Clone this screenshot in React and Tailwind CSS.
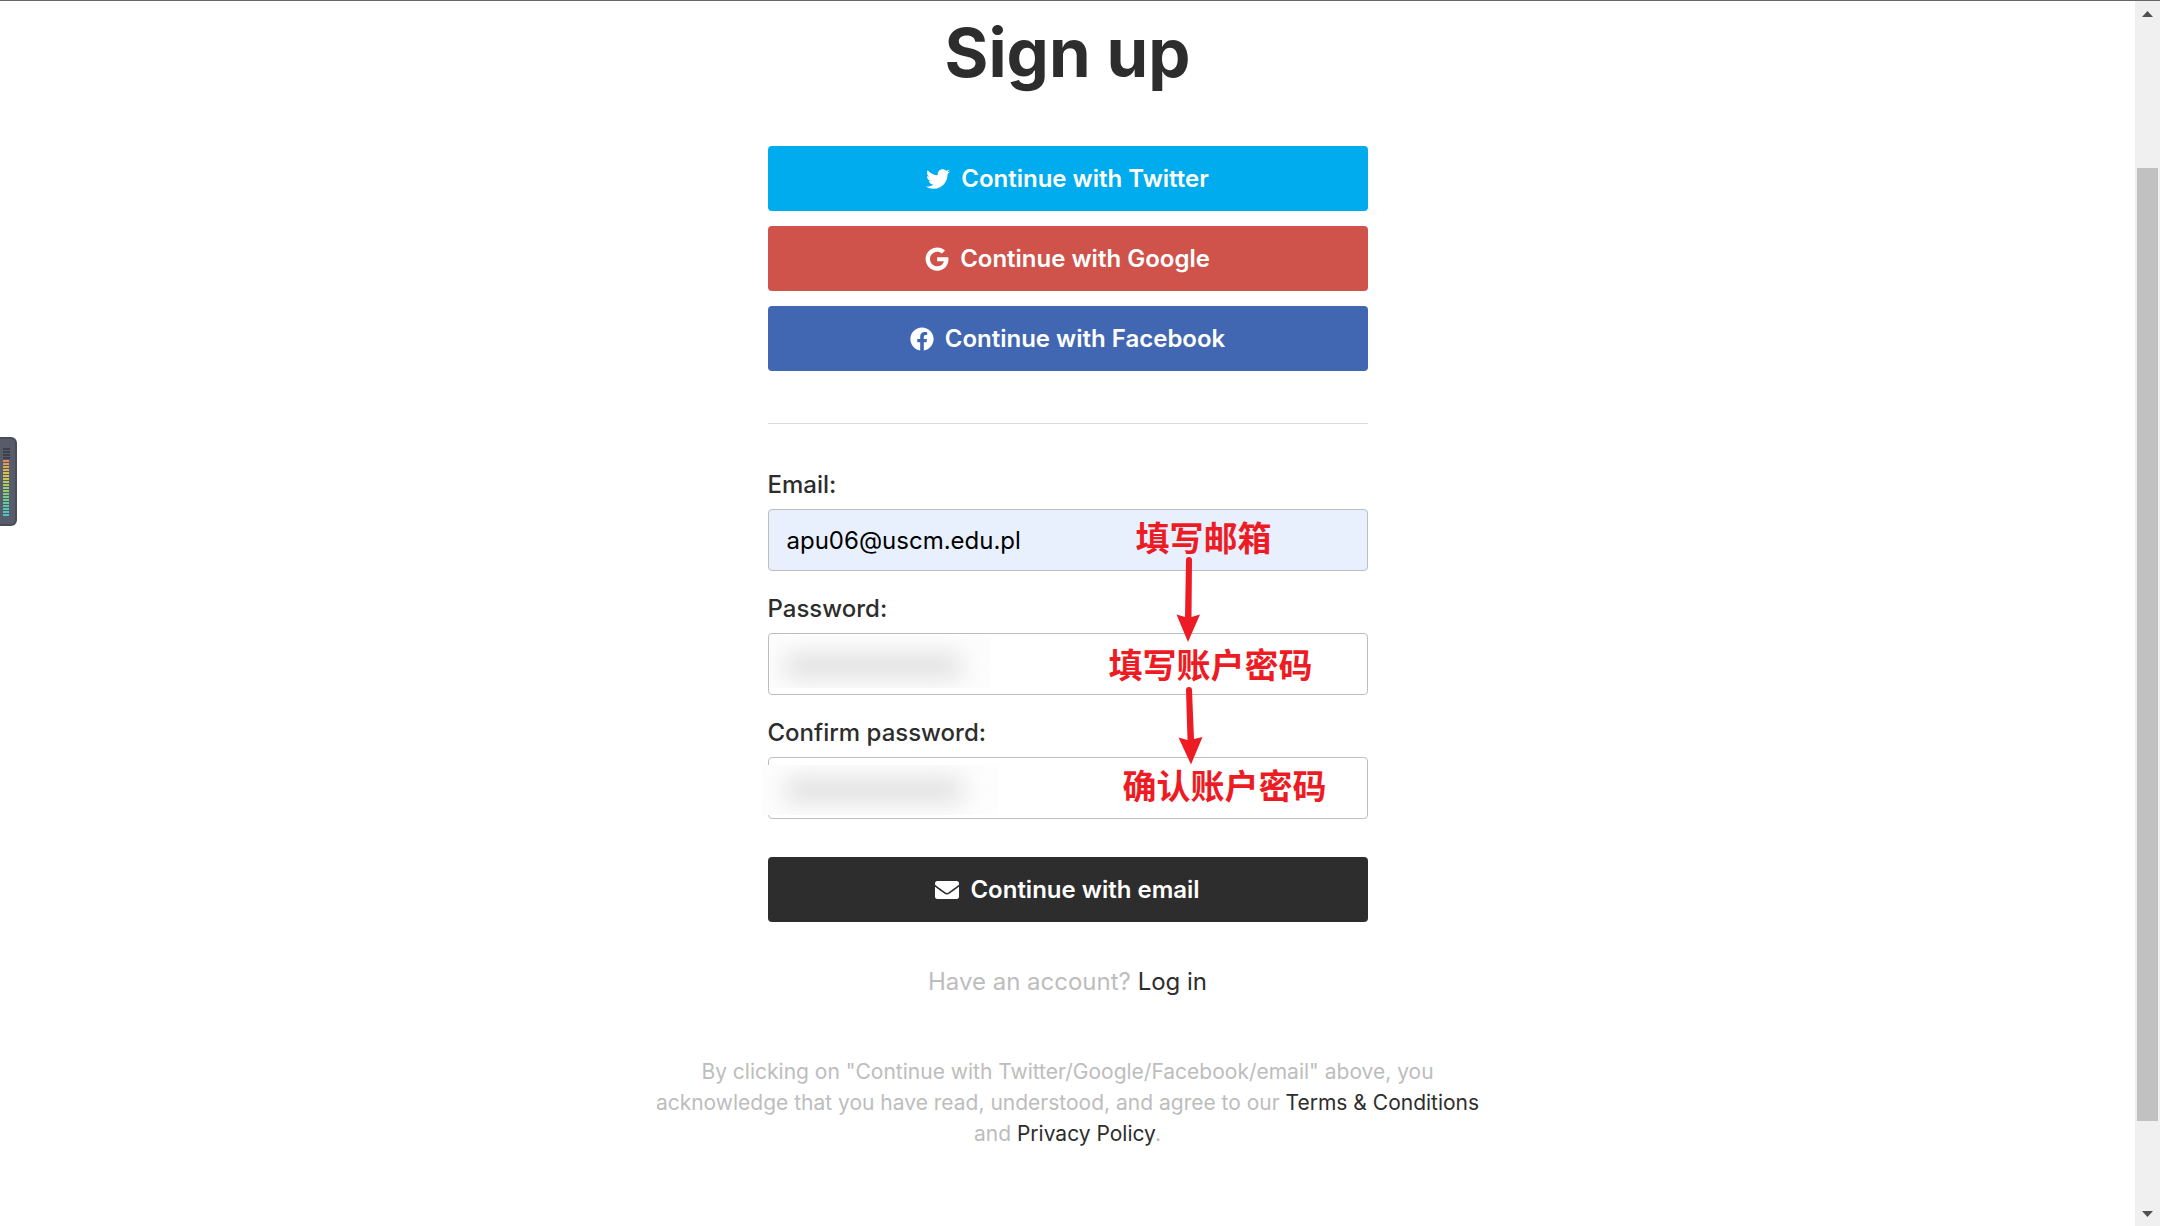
import { FaTwitter, FaGoogle, FaFacebook, FaEnvelope } from "react-icons/fa";

const providers = [
  { name: "Twitter", Icon: FaTwitter, color: "bg-[#00aced]" },
  { name: "Google", Icon: FaGoogle, color: "bg-[#cf534b]" },
  { name: "Facebook", Icon: FaFacebook, color: "bg-[#4267b2]" },
];

const meterColors = [
  "#e5895c", "#e39a55", "#e0a64f", "#dcb34b", "#d9bd4a", "#d3c54c", "#c6c951", "#b8cb57", "#aacb5e", "#9ccb67",
  "#8fcb70", "#82cb7b", "#77ca87", "#6cc993", "#62c89f", "#5ac7aa", "#55c6b4", "#52c5bd", "#50c4c4",
];

function ActionButton({ Icon, color, children }) {
  return (
    <button
      type="button"
      className={`flex h-[65px] w-full items-center justify-center gap-[11px] rounded text-2xl font-semibold text-white ${color}`}
    >
      <Icon className="size-6" aria-hidden="true" />
      <span>{children}</span>
    </button>
  );
}

function Field({ id, label, type, value, filled, children }) {
  return (
    <div className="flex flex-col">
      <label htmlFor={id} className="mb-1 text-2xl leading-10 font-medium">
        {label}
      </label>
      <div className="relative">
        <input
          id={id}
          type={type}
          defaultValue={value}
          className={`block h-[62px] w-full rounded border border-[#bdbdbd] px-[18px] text-2xl text-black ${filled ? "bg-[#e8f0fe]" : "bg-white"}`}
        />
        {children}
      </div>
    </div>
  );
}

function Note({ className, children }) {
  return (
    <span
      className={`pointer-events-none absolute text-[34px] leading-10 font-bold whitespace-nowrap text-[#ed1c24] [font-family:'Noto_Sans_CJK_SC',sans-serif] ${className}`}
    >
      {children}
    </span>
  );
}

function SoftMask({ className }) {
  return (
    <div className={`pointer-events-none absolute flex items-center overflow-hidden bg-[#fdfdfd] ${className}`}>
      <div className="h-5 w-44 bg-[#dadada] blur-[12px]" />
    </div>
  );
}

function LevelMeter() {
  return (
    <div className="absolute top-[436px] left-0 flex h-[89px] w-[17px] flex-col gap-px rounded-r-md border-2 border-l-0 border-[#484c58] bg-[#575c6b] pt-[9px] pl-[3px]">
      {[0, 1, 2, 3].map((i) => (
        <div key={i} className="h-[2px] w-[7px] bg-[#3c404a]" />
      ))}
      {meterColors.map((c) => (
        <div key={c} className="h-[2px] w-[6px]" style={{ backgroundColor: c }} />
      ))}
    </div>
  );
}

export default function App() {
  return (
    <div className="relative flex min-h-screen border-t border-[#666] bg-white text-[#2d2d2d] [font-family:Inter,sans-serif]">
      <LevelMeter />
      <main className="flex flex-1 flex-col items-center pt-2">
        <h1 className="mb-[49px] text-[67px] leading-[88px] font-bold">Sign up</h1>
        <div className="flex w-full max-w-[600px] flex-col">
          <div className="flex flex-col gap-[15px]">
            {providers.map(({ name, Icon, color }) => (
              <ActionButton key={name} Icon={Icon} color={color}>
                Continue with {name}
              </ActionButton>
            ))}
          </div>
          <hr className="mt-[52px] mb-[41px] border-[#dcdcdc]" />
          <form className="relative flex flex-col gap-[18px]">
            <Field id="email" label="Email:" type="email" value="apu06@uscm.edu.pl" filled>
              <Note className="top-2 left-[368px]">填写邮箱</Note>
            </Field>
            <Field id="password" label="Password:" type="password">
              <SoftMask className="top-[3px] left-px h-[52px] w-[222px] pt-2 pl-4" />
              <Note className="top-[11px] left-[341px]">填写账户密码</Note>
            </Field>
            <Field id="confirm" label="Confirm password:" type="password">
              <SoftMask className="top-2 -left-1.5 h-[50px] w-[236px] pl-6" />
              <Note className="top-2 left-[355px]">确认账户密码</Note>
            </Field>
            <svg
              className="pointer-events-none absolute top-[92px] left-[400px] h-[210px] w-[44px]"
              viewBox="0 0 44 210"
              fill="#ed1c24"
              aria-hidden="true"
            >
              <path d="M18 3a3 3 0 0 1 6 0L23.500 60 32 57.500 20 85 8.500 57.500 17 60Z" />
              <path d="M18 133a3 3 0 0 1 6 0L26 182 34.500 180 23 207.500 10.500 180.500 19.500 183Z" />
            </svg>
          </form>
          <div className="mt-[38px]">
            <ActionButton Icon={FaEnvelope} color="bg-[#2d2d2d]">
              Continue with email
            </ActionButton>
          </div>
        </div>
        <p className="mt-10 text-2xl leading-10 text-[#bdbdbd]">
          Have an account? <a href="#login" className="text-[#2d2d2d]">Log in</a>
        </p>
        <p className="mt-[54px] w-full max-w-[840px] text-center text-[21px] leading-[31px] text-[#bdbdbd]">
          By clicking on "Continue with Twitter/Google/Facebook/email" above, you acknowledge that you have read,
          understood, and agree to our <a href="#terms" className="text-[#2d2d2d]">Terms &amp; Conditions</a> and{" "}
          <a href="#privacy" className="text-[#2d2d2d]">Privacy Policy</a>.
        </p>
      </main>
      <div className="flex w-[25px] flex-col items-center bg-[#f0f0f0]" aria-hidden="true">
        <svg className="mt-2.5 h-[6px] w-[11px] shrink-0" viewBox="0 0 11 6" fill="#505050">
          <path d="M5.500 0 11 6H0Z" />
        </svg>
        <div className="mt-[151px] mb-[90px] w-[21px] flex-1 bg-[#c1c1c1]" />
        <svg className="mb-[9px] h-[6px] w-[11px] shrink-0" viewBox="0 0 11 6" fill="#505050">
          <path d="M0 0H11L5.500 6Z" />
        </svg>
      </div>
    </div>
  );
}
